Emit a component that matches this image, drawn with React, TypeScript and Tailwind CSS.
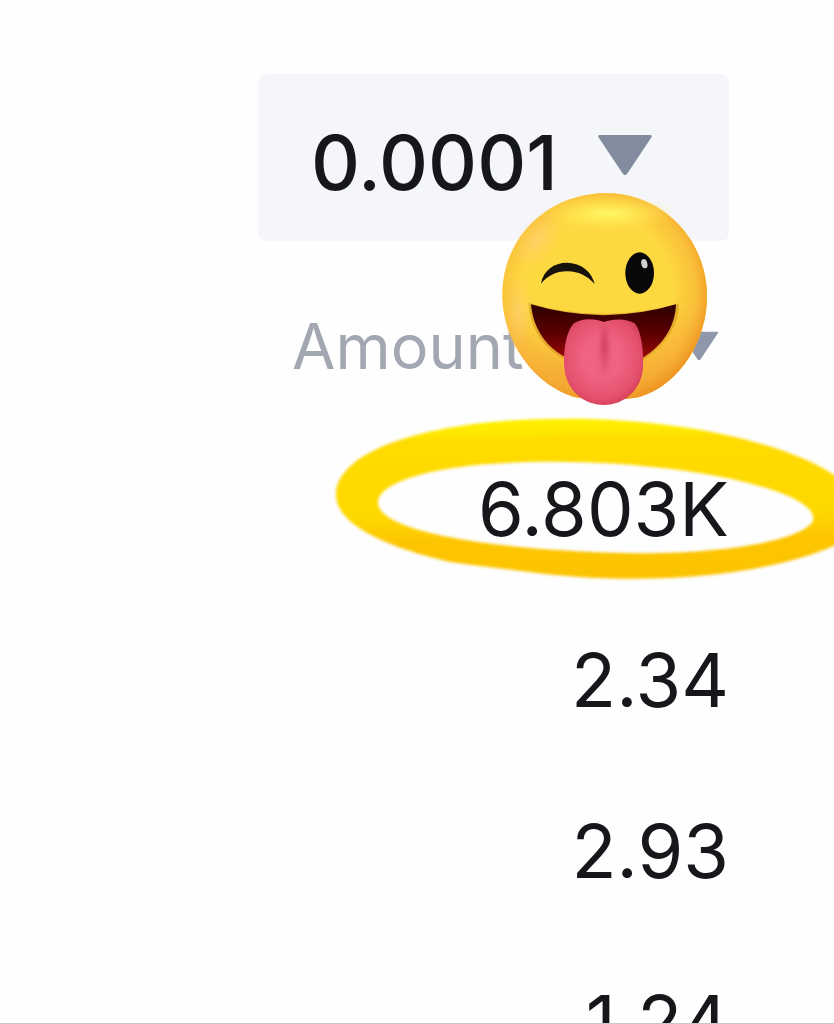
import React from "react";

const amounts = ["6.803K", "2.34", "2.93", "1.24"];
const steps = ["0.0001", "0.001", "0.01"];

function Triangle({ className }: { className: string }) {
  return (
    <svg viewBox="0 0 56 42" className={className} aria-hidden="true">
      <path d="M3 1H53Q56 1 54 4L30 40Q28 42 26 40L2 4Q0 1 3 1Z" fill="currentColor" />
    </svg>
  );
}

function WinkingFace() {
  return (
    <svg
      viewBox="0 0 720 720"
      className="pointer-events-none absolute -top-[89px] -right-px z-10 size-60"
      aria-hidden="true"
    >
      <defs>
        <linearGradient id="face" x1="0" y1="0" x2="0" y2="1">
          <stop offset="0" stopColor="#fed943" />
          <stop offset="0.55" stopColor="#fdd940" />
          <stop offset="0.8" stopColor="#f8bd3b" />
          <stop offset="1" stopColor="#eba02e" />
        </linearGradient>
        <radialGradient id="rim" cx="0.46" cy="0.47" r="0.56">
          <stop offset="0.66" stopColor="#f5a52b" stopOpacity="0" />
          <stop offset="0.86" stopColor="#f8ac35" stopOpacity="0.55" />
          <stop offset="1" stopColor="#ee9420" stopOpacity="0.95" />
        </radialGradient>
        <radialGradient id="shine">
          <stop offset="0" stopColor="#fff966" />
          <stop offset="1" stopColor="#ffe650" stopOpacity="0" />
        </radialGradient>
        <radialGradient id="cheek">
          <stop offset="0" stopColor="#ffd080" stopOpacity="0.6" />
          <stop offset="1" stopColor="#ffc267" stopOpacity="0" />
        </radialGradient>
        <linearGradient id="mouth" x1="0" y1="0" x2="0" y2="1">
          <stop offset="0.1" stopColor="#350000" />
          <stop offset="0.55" stopColor="#5b0002" />
          <stop offset="1" stopColor="#970706" />
        </linearGradient>
        <radialGradient id="tongue" cx="0.48" cy="0.45" r="0.6">
          <stop offset="0.4" stopColor="#f06381" />
          <stop offset="0.8" stopColor="#e4506d" />
          <stop offset="1" stopColor="#cf3852" />
        </radialGradient>
        <linearGradient id="crease" x1="0" y1="0" x2="0" y2="1">
          <stop offset="0" stopColor="#d03c5e" stopOpacity="0.3" />
          <stop offset="0.4" stopColor="#d03c5e" stopOpacity="0.8" />
          <stop offset="1" stopColor="#d9456a" stopOpacity="0" />
        </linearGradient>
        <filter id="soften" x="-100%" y="-20%" width="300%" height="140%">
          <feGaussianBlur stdDeviation="6" />
        </filter>
      </defs>
      <path
        d="M350 39C508 39 651 170 651 350C651 480 570 613 450 650C400 662 300 662 250 650C132 615 37 482 37 345C37 165 181 39 350 39Z"
        fill="url(#face)"
      />
      <path
        d="M350 39C508 39 651 170 651 350C651 480 570 613 450 650C400 662 300 662 250 650C132 615 37 482 37 345C37 165 181 39 350 39Z"
        fill="url(#rim)"
      />
      <ellipse cx="355" cy="100" rx="200" ry="54" fill="url(#shine)" />
      <ellipse cx="85" cy="400" rx="46" ry="120" fill="url(#cheek)" />
      <ellipse cx="142" cy="180" rx="60" ry="100" transform="rotate(38 142 180)" fill="url(#cheek)" />
      <path d="M153 311C160 270 194 247 233 248C278 250 306 278 314 312C290 286 265 275 234 274C200 273 174 286 153 311Z" fill="#17120b" />
      <ellipse cx="449" cy="279" rx="43" ry="62" fill="#080808" />
      <ellipse cx="463" cy="251" rx="9" ry="14" transform="rotate(-15 463 251)" fill="#cfd0d2" />
      <path d="M116 369Q340 435 567 370C568 425 535 492 459 540L222 537C150 500 118 430 116 369Z" fill="#c98516" opacity="0.45" />
      <path d="M123 373Q340 438 558 373C556 430 528 490 459 533L225 531C158 495 128 433 123 373Z" fill="url(#mouth)" />
      <path d="M252 430C280 411 320 418 342 426C368 416 410 414 434 430C455 454 462 520 459 562C455 628 405 675 342 675C277 675 228 628 223 562C220 515 227 455 252 430Z" fill="url(#tongue)" />
      <path d="M343 430C333 480 333 545 342 600C355 550 355 480 343 430Z" fill="url(#crease)" stroke="url(#crease)" strokeWidth="8" filter="url(#soften)" />
    </svg>
  );
}

function MarkerRing() {
  return (
    <svg
      viewBox="0 0 1650 600"
      className="pointer-events-none absolute -top-[23px] -right-[141px] h-[200px] w-[550px]"
      aria-hidden="true"
    >
      <defs>
        <linearGradient id="marker" x1="0" y1="0" x2="0.05" y2="1">
          <stop offset="0.04" stopColor="#ffef00" />
          <stop offset="0.09" stopColor="#ffea00" />
          <stop offset="0.16" stopColor="#ffdb00" />
          <stop offset="0.62" stopColor="#ffd800" />
          <stop offset="0.78" stopColor="#fdc500" />
          <stop offset="1" stopColor="#fcc400" />
        </linearGradient>
        <filter id="edge">
          <feGaussianBlur stdDeviation="4" />
        </filter>
      </defs>
      <path
        fillRule="evenodd"
        filter="url(#edge)"
        fill="url(#marker)"
        d="M48 285C48 150 330 56 740 56C1090 56 1400 130 1542 225C1600 265 1625 300 1625 335C1625 375 1590 410 1542 437C1400 500 1180 536 940 536C820 536 720 528 620 515C540 505 470 498 390 486C190 440 48 370 48 285ZM174 308C174 245 350 185 700 185C1100 185 1480 270 1480 355C1480 405 1280 460 960 460C560 455 174 400 174 308Z"
      />
    </svg>
  );
}

export default function App() {
  return (
    <main className="flex h-screen flex-col items-end overflow-hidden border-b border-[#c8c8c8] bg-[#fefefe] pt-[74px] pr-[105px] font-['Inter',sans-serif] text-[#15171b]">
      <div className="relative shrink-0">
        <select
          aria-label="Price step"
          className="block h-[167px] w-[471px] appearance-none rounded-lg bg-[#f4f6fa] pt-2 pl-[53px] text-[76px] font-medium"
        >
          {steps.map((step) => (
            <option key={step}>{step}</option>
          ))}
        </select>
        <Triangle className="pointer-events-none absolute top-[60px] right-[76px] w-14 text-[#838b9f]" />
      </div>
      <table className="mt-7 w-[437px] shrink-0 border-collapse text-right text-[74px] leading-none">
        <thead>
          <tr>
            <th scope="col" className="relative h-[154px] p-0 font-normal">
              <button type="button" className="flex w-full items-center justify-between text-[63px] leading-none text-[#a2a7b2]">
                Amount
                <Triangle className="mr-2.5 w-10 text-[#8f97aa]" />
              </button>
              <WinkingFace />
            </th>
          </tr>
        </thead>
        <tbody>
          {amounts.map((amount, index) => (
            <tr key={amount}>
              <td className="relative h-[171px] p-0">
                {index === 0 && <MarkerRing />}
                <span className="relative">{amount}</span>
              </td>
            </tr>
          ))}
        </tbody>
      </table>
    </main>
  );
}
